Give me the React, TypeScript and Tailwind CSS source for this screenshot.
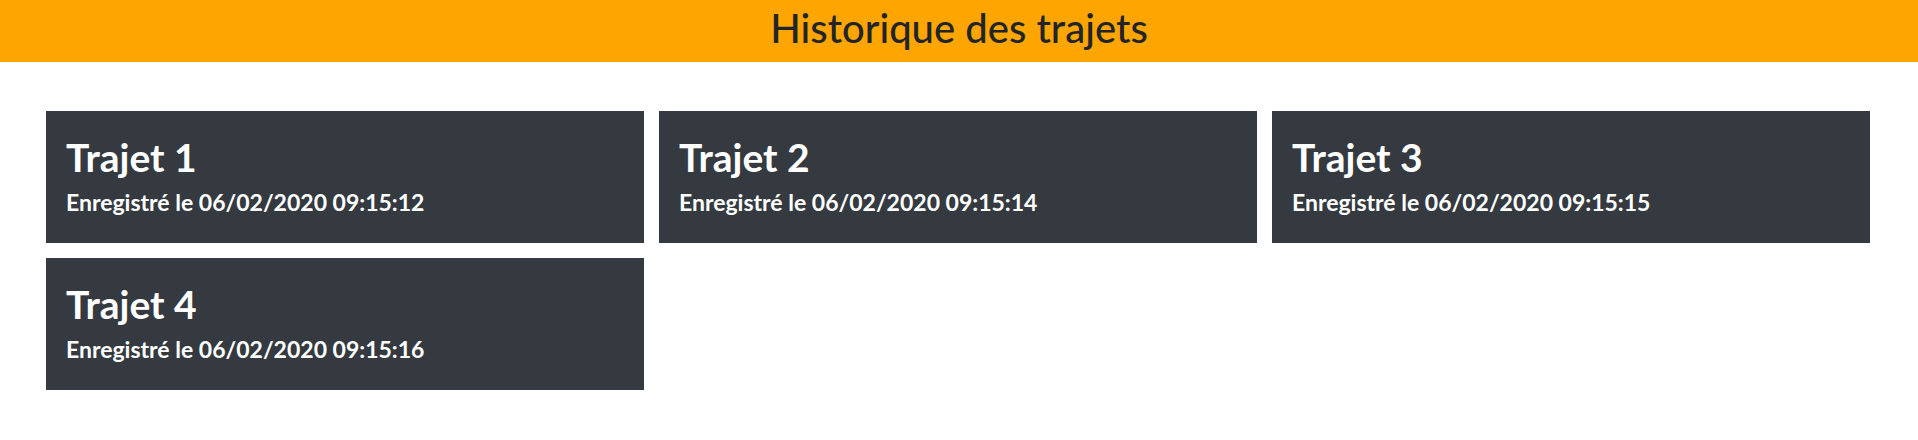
import React from "react";

const trajets = [
  { name: "Trajet 1", date: "06/02/2020 09:15:12" },
  { name: "Trajet 2", date: "06/02/2020 09:15:14" },
  { name: "Trajet 3", date: "06/02/2020 09:15:15" },
  { name: "Trajet 4", date: "06/02/2020 09:15:16" },
];

export default function App() {
  return (
    <div className="min-h-[440px] bg-white font-['Lato',sans-serif]">
      <header className="flex h-[62px] items-start justify-center bg-[#ffa500] pt-[4px]">
        <h1 className="text-[40px] font-medium leading-[48px] text-[#212529]">Historique des trajets</h1>
      </header>
      <main className="grid grid-cols-3 gap-[15px] pl-[46px] pr-[48px] pt-[49px]">
        {trajets.map((t) => (
          <div key={t.name} className="flex h-[132px] flex-col bg-[#343a40] px-[20px] pt-[22px] text-white">
            <h2 className="text-[39px] font-bold leading-[48px]">{t.name}</h2>
            <p className="mt-[8px] text-[23px] font-bold leading-[26px]">Enregistré le {t.date}</p>
          </div>
        ))}
      </main>
    </div>
  );
}
